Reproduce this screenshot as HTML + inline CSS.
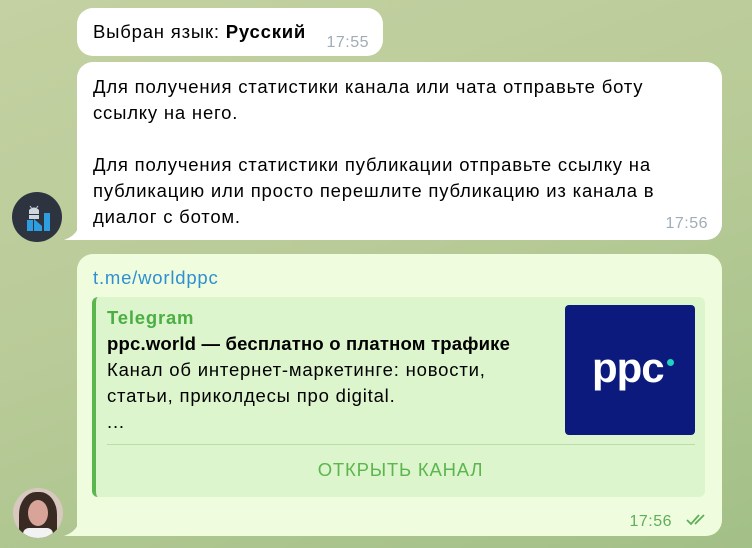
<!DOCTYPE html>
<html><head><meta charset="utf-8"><style>
body{margin:0;width:752px;height:548px;overflow:hidden;background:linear-gradient(160deg,#c4d1a2 0%,#b9cb98 45%,#a3c088 100%);font-family:"Liberation Sans",sans-serif;position:relative;color:#000}
.b{position:absolute;background:#fff;border-radius:16px;font-size:18.5px;line-height:26px;letter-spacing:0.8px;white-space:nowrap}
.t{position:absolute;font-size:16px;color:#a0acb6;letter-spacing:0.5px}
</style></head><body>
<div class="b" style="left:77px;top:8px;width:306px;height:48px">
<div style="position:absolute;left:16px;top:11px">Выбран язык: <b>Русский</b></div>
<div class="t" style="right:14px;top:22px">17:55</div></div>
<div class="b" style="left:77px;top:62px;width:645px;height:178px;border-bottom-left-radius:0">
<div style="position:absolute;left:16px;top:12px">Для получения статистики канала или чата отправьте боту<br>ссылку на него.<br><br>Для получения статистики публикации отправьте ссылку на<br>публикацию или просто перешлите публикацию из канала в<br>диалог с ботом.</div>
<div class="t" style="right:14px;top:149px;">17:56</div></div>
<svg style="position:absolute;left:64px;top:228px" width="14" height="12"><path d="M14 0V12H0C6 10 12 6 14 0Z" fill="#fff"/></svg>
<div style="position:absolute;left:12px;top:192px;width:50px;height:50px;border-radius:50%;background:#2d3440">
<svg width="50" height="50"><rect x="15" y="28" width="6" height="11" fill="#2e9ee0"/><path d="M22 27L30 34V39H22Z" fill="#2e9ee0"/><rect x="32" y="21" width="6" height="18" fill="#2e9ee0"/><path d="M17 18Q22 13 27 18V22H17Z" fill="#cfd6de"/><rect x="17" y="23" width="10" height="4" fill="#cfd6de"/><path d="M18 14L19.5 16M26 14L24.5 16" stroke="#cfd6de"/></svg></div>
<div class="b" style="left:77px;top:254px;width:645px;height:282px;background:#effdde;border-bottom-left-radius:0">
<div style="position:absolute;left:16px;top:11px;color:#2f8fd0">t.me/worldppc</div>
<div style="position:absolute;left:15px;top:43px;width:613px;height:200px;background:#dcf5cc;border-radius:6px;border-left:4px solid #5cb64f;box-sizing:border-box">
<div style="position:absolute;left:11px;top:8px;color:#4caf45;font-weight:bold">Telegram</div>
<div style="position:absolute;left:11px;top:34px;font-weight:bold;letter-spacing:0.2px">ppc.world — бесплатно о платном трафике</div>
<div style="position:absolute;left:11px;top:60px">Канал об интернет-маркетинге: новости,<br>статьи, приколдесы про digital.<br>...</div>
<div style="position:absolute;left:469px;top:8px;width:130px;height:130px;background:#0b1a7c;border-radius:4px">
<div style="position:absolute;left:27px;top:42px;color:#fff;font-weight:bold;font-size:42px;line-height:42px;letter-spacing:-1px">ppc</div>
<div style="position:absolute;left:102px;top:54px;width:7px;height:7px;border-radius:50%;background:#1ed3c0"></div></div>
<div style="position:absolute;left:11px;right:10px;top:147px;border-top:1px solid #b9dfa8"></div>
<div style="position:absolute;left:0;right:0;top:160px;text-align:center;color:#5cb64f">ОТКРЫТЬ КАНАЛ</div>
</div>
<div class="t" style="right:50px;top:255px;color:#5fae58">17:56</div>
<svg style="position:absolute;right:10px;top:259px" width="26" height="14"><path d="M1 7L5 11L13 2M9 11L18 2" stroke="#5fae58" stroke-width="1.8" fill="none"/></svg>
</div>
<svg style="position:absolute;left:64px;top:524px" width="14" height="12"><path d="M14 0V12H0C6 10 12 6 14 0Z" fill="#effdde"/></svg>
<div style="position:absolute;left:13px;top:488px;width:50px;height:50px;border-radius:50%;background:#d9c8bf;overflow:hidden">
<div style="position:absolute;left:6px;top:4px;width:38px;height:50px;border-radius:45% 45% 0 0;background:#3a2a24"></div>
<div style="position:absolute;left:15px;top:12px;width:20px;height:26px;border-radius:50%;background:#d8a49a"></div>
<div style="position:absolute;left:10px;top:40px;width:30px;height:12px;background:#f2f2f2;border-radius:6px 6px 0 0"></div></div>
</body></html>
